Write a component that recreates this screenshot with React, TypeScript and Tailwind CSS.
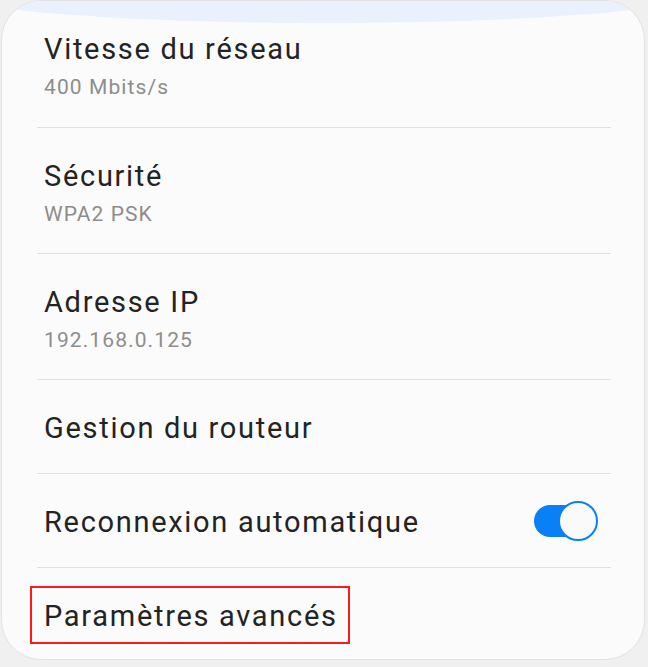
import React from "react";

const font = { fontFamily: "Roboto, 'Noto Sans', Arial, sans-serif" };

function Row({
  title,
  subtitle,
  divider = true,
  pb,
  children,
}: {
  title: React.ReactNode;
  subtitle?: string;
  divider?: boolean;
  pb: string;
  children?: React.ReactNode;
}) {
  return (
    <div>
      <div className={`flex items-start pl-[42px] pt-[28px] ${pb}`}>
        <div className="flex flex-col">
          <div className="text-[29px] leading-[40px] tracking-[1.7px] text-[#232323]">{title}</div>
          {subtitle && (
            <div className="text-[21px] leading-[36px] tracking-[1.1px] text-[#8d8d8d]">{subtitle}</div>
          )}
        </div>
        {children}
      </div>
      {divider && <div className="ml-[35px] mr-[33px] h-px bg-[#e0e0e0]" />}
    </div>
  );
}

function Toggle() {
  return (
    <div className="relative ml-auto mr-[46px] -mt-[1px] h-[40px] w-[64px]">
      <div className="absolute left-0 top-[4px] h-[32px] w-[50px] rounded-full bg-[#0a80f6]" />
      <div className="absolute right-0 top-0 h-[40px] w-[40px] rounded-full border-[2.5px] border-[#0a80f6] bg-[#fafafa]" />
    </div>
  );
}

export default function App() {
  return (
    <div className="h-[667px] w-[648px] bg-[#f0f0f0] pl-[1px] pr-[3px]" style={font}>
      <div className="relative h-[660px] overflow-hidden rounded-[40px] border border-[#e2e2e2] bg-[#fbfbfb]">
        <svg
          className="absolute left-0 top-0"
          width="646"
          height="40"
          viewBox="0 0 646 40"
        >
          <ellipse cx="323" cy="-14" rx="400" ry="36" fill="#e8f1fc" />
        </svg>
        <div className="relative">
          <Row title="Vitesse du réseau" subtitle="400 Mbits/s" pb="pb-[22px]" />
          <Row title="Sécurité" subtitle="WPA2 PSK" pb="pb-[21px]" />
          <Row title="Adresse IP" subtitle="192.168.0.125" pb="pb-[21px]" />
          <Row title="Gestion du routeur" pb="pb-[25px]" />
          <Row title="Reconnexion automatique" pb="pb-[25px]">
            <Toggle />
          </Row>
          <Row
            divider={false}
            pb="pb-[23px]"
            title={
              <span className="relative inline-block">
                Paramètres avancés
                <span className="absolute left-[-14px] top-[-10px] h-[58px] w-[320px] border-2 border-[#ff1a1a]" />
              </span>
            }
          />
        </div>
      </div>
    </div>
  );
}
